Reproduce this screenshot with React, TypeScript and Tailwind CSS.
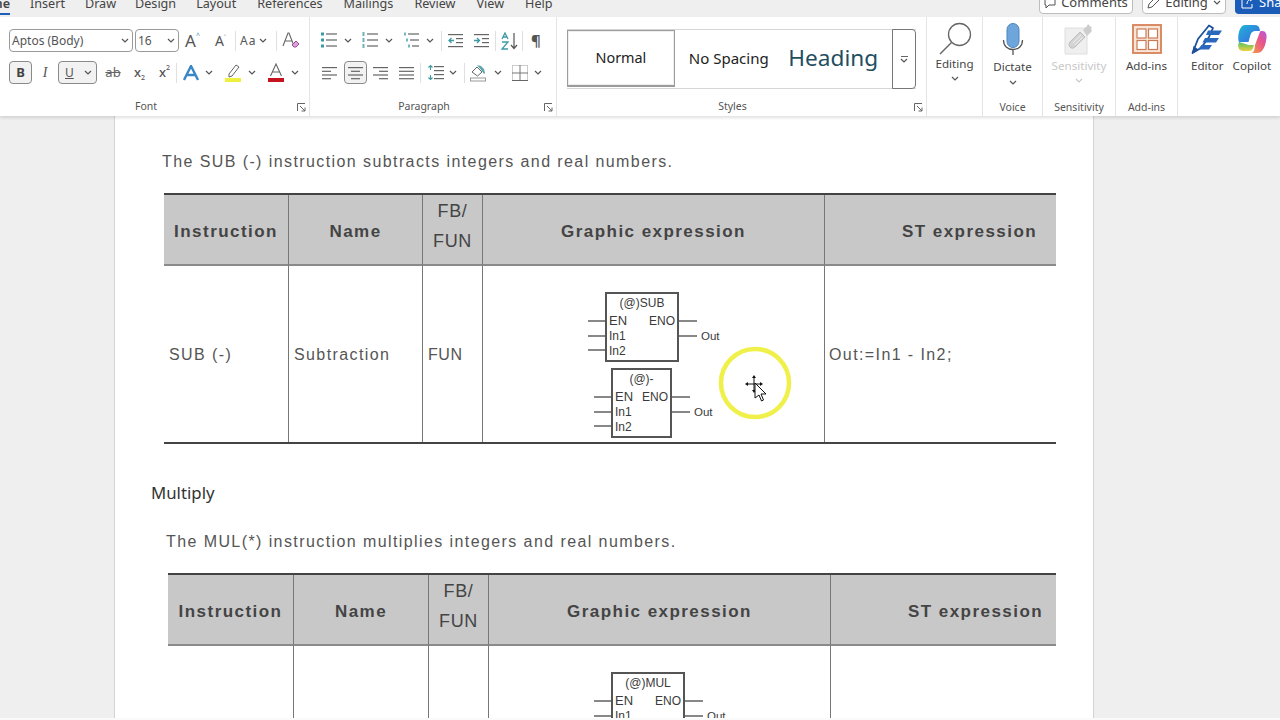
import React from "react";

const UI = "font-['Noto_Sans','Open_Sans',sans-serif]";
const DOC = "font-['Liberation_Sans',sans-serif]";

function Chev({ className = "", color = "#555" }: { className?: string; color?: string }) {
  return (
    <svg width="8" height="5" viewBox="0 0 8 5" className={className}>
      <path d="M1 1l3 3 3-3" fill="none" stroke={color} strokeWidth="1.2" />
    </svg>
  );
}

function Launcher() {
  return (
    <svg width="9" height="9" viewBox="0 0 9 9" className="shrink-0">
      <path d="M.5 8V.5H8M3 3l5 5M8 4.500V8H4.500" fill="none" stroke="#666" strokeWidth="1" />
    </svg>
  );
}

function Lines({ kind }: { kind: "l" | "c" | "r" | "j" }) {
  const rows = [16, 10, 16, 10];
  return (
    <svg width="17" height="14" viewBox="0 0 17 14">
      {rows.map((w, i) => {
        const ww = kind === "j" ? 15 : w - 1;
        const x = kind === "l" || kind === "j" ? 1 : kind === "c" ? (17 - ww) / 2 : 16 - ww;
        return <rect key={i} x={x} y={1 + i * 3.7} width={ww} height="1.2" fill="#666" />;
      })}
    </svg>
  );
}

function Bullets({ type }: { type: "b" | "n" | "m" }) {
  const t = "#3d9aa5";
  return (
    <svg width="17" height="17" viewBox="0 0 17 17">
      {[2, 8, 14].map((y, i) => (
        <g key={y}>
          {type === "b" && <rect x="1" y={y - 1.5} width="3" height="3" fill={t} />}
          {type === "n" && <rect x="1.500" y={y - 2} width="2" height="4" fill={t} opacity=".75" />}
          {type === "m" && <rect x={1 + i * 2} y={y - 1.5} width="2" height="3" fill={t} opacity=".7" />}
          <rect x={type === "m" ? 5 + i * 2 : 6} y={y - 0.6} width={type === "m" ? 11 - i * 2 : 11} height="1.2" fill="#666" />
        </g>
      ))}
    </svg>
  );
}

function Indent({ dir }: { dir: "l" | "r" }) {
  return (
    <svg width="16" height="15" viewBox="0 0 16 15">
      <rect x="0" y="1" width="15" height="1.2" fill="#666" />
      <rect x="0" y="13" width="15" height="1.2" fill="#666" />
      <rect x="8" y="5" width="7" height="1.2" fill="#666" />
      <rect x="8" y="9" width="7" height="1.2" fill="#666" />
      <path d={dir === "l" ? "M6 7.500H1M3.500 5L1 7.500 3.500 10" : "M0 7.500h5M3 5l2.500 2.500L3 10"} fill="none" stroke="#3d9aa5" strokeWidth="1.3" />
    </svg>
  );
}

function Mag() {
  return (
    <svg width="34" height="34" viewBox="0 0 34 34">
      <circle cx="21.500" cy="12.500" r="11" fill="none" stroke="#666" strokeWidth="1.3" />
      <path d="M13.500 20.500L2 32" stroke="#666" strokeWidth="1.500" />
    </svg>
  );
}

function Mic() {
  return (
    <svg width="22" height="32" viewBox="0 0 22 32">
      <rect x="5" y="0.500" width="12" height="24" rx="6" fill="#6ea6dc" stroke="#4c86bd" />
      <path d="M1.500 17c0 6 4 9.500 9.500 9.500s9.500-3.500 9.500-9.500M11 26.500V32" fill="none" stroke="#555" strokeWidth="1.300" />
    </svg>
  );
}

function SensitivityIcon() {
  return (
    <svg width="30" height="32" viewBox="0 0 30 32">
      <path d="M1 5h22v26H1z" fill="#efefef" stroke="#dedede" />
      <path d="M6 19L16 9l5 5-10 10c-2 1.500-4 1.500-5 0s-1.500-3 0-5z" fill="#d4d4d4" stroke="#bdbdbd" />
      <path d="M9 20l8-8M11 22l8-8" stroke="#efefef" />
      <path d="M19 7l4-4 1-2 4 4-1 1 1 2-5 5z" fill="#cdcdcd" />
    </svg>
  );
}

function AddIns() {
  return (
    <svg width="30" height="30" viewBox="0 0 30 30">
      <rect x="1" y="1" width="28" height="28" fill="#f9e5d8" stroke="#d68157" strokeWidth="1.800" />
      <rect x="5" y="5" width="9" height="9" fill="#fff" stroke="#c97b55" strokeWidth="1.200" />
      <rect x="16.500" y="5" width="9" height="9" fill="#fff" stroke="#c97b55" strokeWidth="1.200" />
      <rect x="5" y="16.500" width="9" height="9" fill="#fff" stroke="#c97b55" strokeWidth="1.200" />
      <rect x="16.500" y="16.500" width="9" height="9" fill="#fff" stroke="#c97b55" strokeWidth="1.200" />
    </svg>
  );
}

function EditorIcon() {
  return (
    <svg width="32" height="32" viewBox="0 0 32 32">
      <path d="M1.500 30L7 16 18 2.500l4 2.500-4 9-8 11z" fill="#fff" stroke="#1d4f9c" strokeWidth="1.800" strokeLinejoin="round" />
      <path d="M1 31l1.500-8 5 3.500z" fill="#1d4f9c" />
      <path d="M17 7.500h14l-3 4.500H15zM14 15h14l-3 4.500H11.500zM10.500 22H21l-3 4.500H7z" fill="#2a68bd" />
    </svg>
  );
}

function Copilot() {
  return (
    <svg width="30" height="30" viewBox="0 0 30 30">
      <defs>
        <linearGradient id="cpa" x1="0" y1="0" x2="1" y2="1">
          <stop offset="0" stopColor="#1fb6d8" />
          <stop offset="1" stopColor="#3d62e0" />
        </linearGradient>
        <linearGradient id="cpb" x1="0" y1="1" x2="1" y2="0">
          <stop offset="0" stopColor="#f5a13a" />
          <stop offset=".6" stopColor="#e8558c" />
          <stop offset="1" stopColor="#b15be0" />
        </linearGradient>
        <linearGradient id="cpc" x1="0" y1="0" x2="0" y2="1">
          <stop offset="0" stopColor="#4dc16a" />
          <stop offset="1" stopColor="#eed13c" />
        </linearGradient>
      </defs>
      <path d="M8 1h10c2 0 4 1 4.500 3.500L23 7h-4c-3 0-4.500 1-5.500 4l-2 7H2C0 14 2 1 8 1z" fill="url(#cpa)" />
      <path d="M2 18c-2 5 0 9 4 9h6c2 0 3.500-1 4-3l1-3H11.500z" fill="url(#cpc)" />
      <path d="M18 21l4.500-12c.500-1.500 1-2 2-2h1c3 0 4.500 3 4 7-.700 6-3 15-9 15h-7c3 0 4-2 4.500-8z" fill="url(#cpb)" />
      <path d="M13.500 11c1-3 2.500-4 5.500-4h4c-1 0-1.500.500-2 2l-4 12h-6z" fill="#fff" opacity=".55" />
    </svg>
  );
}

function Group({ w, label, sep = true, launcher = false, children }: { w: string; label: string; sep?: boolean; launcher?: boolean; children: React.ReactNode }) {
  return (
    <div className={`${w} shrink-0 flex flex-col ${sep ? "border-r border-[#e4e4e4]" : ""}`}>
      <div className="flex-1 min-h-0">{children}</div>
      <div className={`h-[22px] flex items-center relative text-[10.5px] text-[#555] ${launcher ? "pt-[4px]" : "pt-[6px]"}`}>
        <span className={`flex-1 text-center ${launcher ? "pr-[6px]" : ""}`}>{label}</span>
        {launcher && <span className="pr-[3px] flex"><Launcher /></span>}
      </div>
    </div>
  );
}

function BigTool({ label, icon, chevron = false, muted = false, gap = "", chevGap = "mt-[3px]" }: { label: string; icon: React.ReactNode; chevron?: boolean; muted?: boolean; gap?: string; chevGap?: string }) {
  return (
    <div className="flex flex-col items-center pt-[5px]">
      <div className="h-[34px] flex items-center justify-center">{icon}</div>
      <span className={`text-[11.6px] leading-[16px] ${gap} ${muted ? "text-[#c8c8c8]" : "text-[#444]"}`}>{label}</span>
      {chevron && <Chev className={chevGap} color={muted ? "#c8c8c8" : "#555"} />}
    </div>
  );
}

function Ribbon() {
  return (
    <div className={`h-[99px] shrink-0 bg-white flex pl-[1px] shadow-[0_2px_3px_rgba(0,0,0,0.12)] relative z-10 text-[#444] ${UI}`}>
      <Group w="w-[309px]" label="Font" launcher>
        <div className="pt-[12px] pl-[8px] flex flex-col gap-[9px]">
          <div className="flex items-center h-[23px]">
            <div className="w-[124px] h-[23px] border border-[#9a9a9a] rounded-[4px] flex items-center justify-between pl-[2px] pr-[3px] text-[12px] text-[#555]">
              <span className="pt-[1px]">Aptos (Body)</span><Chev />
            </div>
            <div className="w-[44px] h-[23px] ml-[2px] border border-[#9a9a9a] rounded-[4px] flex items-center justify-between pl-[2px] pr-[3px] text-[12px] text-[#555]">
              <span className="pt-[1px]">16</span><Chev />
            </div>
            <span className="ml-[6px] w-[19px] text-[17px] leading-none text-[#555] flex items-start">A<span className="text-[7px] text-[#3d9aa5] leading-none">^</span></span>
            <span className="ml-[11px] w-[15px] text-[14px] text-[#555] flex items-start leading-none">A<span className="text-[7px] leading-none">˅</span></span>
            <span className="ml-[5px] border-l border-[#e0e0e0] h-[20px]" />
            <span className="ml-[4px] text-[12px] text-[#555] tracking-[1px]">Aa</span>
            <Chev className="ml-[3px]" />
            <span className="ml-[9px] border-l border-[#e0e0e0] h-[20px]" />
            <svg width="18" height="17" viewBox="0 0 18 17" className="ml-[5px]">
              <path d="M1 14L6 1h1l5 13M3 9h7" fill="none" stroke="#666" strokeWidth="1.100" />
              <path d="M10 13l4-4 3 3-3 3h-2z" fill="#d9a5d8" stroke="#a347a0" />
            </svg>
          </div>
          <div className="flex items-center h-[23px]">
            <div className="w-[23px] h-[23px] border border-[#8a8a8a] bg-[#f2f2f2] rounded-[4px] flex items-center justify-center text-[13px] font-bold text-[#444]">B</div>
            <span className="w-[26px] text-center font-['Liberation_Serif',serif] italic text-[14px] text-[#555]">I</span>
            <div className="w-[39px] h-[23px] border border-[#8a8a8a] bg-[#f2f2f2] rounded-[4px] flex items-center justify-between pl-[6px] pr-[4px] text-[12px] text-[#555]">
              <span className="underline">U</span><Chev />
            </div>
            <span className="ml-[7px] w-[18px] text-[13px] text-[#666] line-through text-center">ab</span>
            <span className="ml-[10px] w-[15px] text-[13px] font-medium text-[#555] flex items-end justify-center">x<span className="text-[7px] leading-[8px]">2</span></span>
            <span className="ml-[10px] w-[15px] text-[13px] font-medium text-[#555] flex items-start justify-center">x<span className="text-[7px] leading-[10px]">2</span></span>
            <span className="ml-[4px] border-l border-[#e0e0e0] h-[20px]" />
            <svg width="16" height="16" viewBox="0 0 16 16" className="ml-[6px]">
              <path d="M1 15L8 1l7 14M4 10h8" fill="none" stroke="#3a87c8" strokeWidth="2.400" />
            </svg>
            <Chev className="ml-[6px]" />
            <svg width="17" height="20" viewBox="0 0 17 20" className="ml-[12px]">
              <path d="M4 11l7-9 3 2-7 9-3 1z" fill="#fff" stroke="#666" />
              <rect x="0" y="15" width="16" height="4" fill="#eef03c" />
            </svg>
            <Chev className="ml-[6px]" />
            <svg width="17" height="20" viewBox="0 0 17 20" className="ml-[12px]">
              <path d="M2.500 13L8 1l5.500 12M4.500 9h7" fill="none" stroke="#666" strokeWidth="1.100" />
              <rect x="0" y="15" width="16" height="4" fill="#c5131f" />
            </svg>
            <Chev className="ml-[6px]" />
          </div>
        </div>
      </Group>
      <Group w="w-[247px]" label="Paragraph" launcher>
        <div className="pt-[12px] pl-[10px] flex flex-col gap-[9px]">
          <div className="flex items-center h-[23px]">
            <Bullets type="b" /><Chev className="ml-[7px]" />
            <span className="ml-[9px] flex"><Bullets type="n" /></span><Chev className="ml-[7px]" />
            <span className="ml-[10px] flex"><Bullets type="m" /></span><Chev className="ml-[6px]" />
            <span className="ml-[7px] border-l border-[#e0e0e0] h-[20px]" />
            <span className="ml-[6px] flex"><Indent dir="l" /></span>
            <span className="ml-[10px] flex"><Indent dir="r" /></span>
            <span className="ml-[5px] border-l border-[#e0e0e0] h-[20px]" />
            <svg width="18" height="18" viewBox="0 0 18 18" className="ml-[5px]">
              <path d="M1 7L4 1l3 6M2 5h4" fill="none" stroke="#3d9aa5" strokeWidth="1.300" />
              <path d="M1 10h6L1 17h6" fill="none" stroke="#3d9aa5" strokeWidth="1.300" />
              <path d="M13 1v15M10 13l3 3.500 3-3.500" fill="none" stroke="#555" strokeWidth="1.200" />
            </svg>
            <span className="ml-[3px] border-l border-[#e0e0e0] h-[20px]" />
            <span className="ml-[8px] text-[15px] font-bold text-[#555] leading-none">¶</span>
          </div>
          <div className="flex items-center h-[23px]">
            <span className="ml-[1px] flex"><Lines kind="l" /></span>
            <div className="ml-[6px] w-[23px] h-[23px] border border-[#8a8a8a] bg-[#f2f2f2] rounded-[4px] flex items-center justify-center"><Lines kind="c" /></div>
            <span className="ml-[5px] flex"><Lines kind="r" /></span>
            <span className="ml-[9px] flex"><Lines kind="j" /></span>
            <span className="ml-[5px] border-l border-[#e0e0e0] h-[20px]" />
            <svg width="17" height="15" viewBox="0 0 17 15" className="ml-[6px]">
              <path d="M3.500 0v5M1.500 2.500l2-2 2 2M3.500 15v-5M1.500 12.500l2 2 2-2" fill="none" stroke="#3d9aa5" strokeWidth="1.100" />
              <rect x="7" y="1" width="10" height="1.200" fill="#666" />
              <rect x="7" y="5" width="10" height="1.200" fill="#666" />
              <rect x="7" y="9" width="10" height="1.200" fill="#666" />
              <rect x="7" y="13" width="10" height="1.200" fill="#666" />
            </svg>
            <Chev className="ml-[5px]" />
            <span className="ml-[7px] border-l border-[#e0e0e0] h-[20px]" />
            <svg width="17" height="18" viewBox="0 0 17 18" className="ml-[5px]">
              <path d="M2 8l5-5 5 5-4.500 4z" fill="#fff" stroke="#666" />
              <path d="M7 1l4 1 3 3 1 4-1 1-2-3" fill="#5aa5ae" />
              <rect x="0.500" y="14" width="15" height="3" fill="#fff" stroke="#999" />
            </svg>
            <Chev className="ml-[7px]" />
            <svg width="16" height="16" viewBox="0 0 16 16" className="ml-[10px]">
              <rect x=".5" y=".5" width="15" height="15" fill="none" stroke="#999" strokeDasharray="1 1" />
              <path d="M8 0v16M0 8h16" stroke="#777" />
              <path d="M0 15.500h16" stroke="#666" />
            </svg>
            <Chev className="ml-[6px]" />
          </div>
        </div>
      </Group>
      <Group w="w-[370px]" label="Styles" launcher>
        <div className="pt-[12px] pl-[10px] pr-[10px]">
          <div className="h-[60px] flex items-stretch border-y border-[#d6d6d6]">
            <div className="w-[110px] border border-[#9c9c9c] border-b-[2px] flex items-center justify-center text-[14.4px] text-[#222] mb-[1px] shadow-[inset_0_0_0_1px_#eee]">Normal</div>
            <div className="w-[107px] pl-[3px] flex items-center justify-center text-[15px] text-[#222] mb-[2px] whitespace-nowrap">No Spacing</div>
            <div className="w-[102px] pl-[7px] flex items-center justify-center text-[22.6px] text-[#1f4e5f] mb-[2px] whitespace-nowrap">Heading</div>
            <div className="w-[13px]" />
            <div className="w-[24px] -my-[1px] border border-[#777] rounded-r-[4px] flex flex-col items-center justify-center gap-[1px]">
              <span className="w-[7px] h-px bg-[#666]" />
              <Chev />
            </div>
          </div>
        </div>
      </Group>
      <Group w="w-[56px]" label="">
        <BigTool label="Editing" icon={<Mag />} chevron chevGap="mt-[4px]" />
      </Group>
      <Group w="w-[60px]" label="Voice">
        <BigTool label="Dictate" icon={<Mic />} chevron gap="mt-[3px]" chevGap="mt-[5px]" />
      </Group>
      <Group w="w-[73px]" label="Sensitivity">
        <BigTool label="Sensitivity" icon={<SensitivityIcon />} chevron muted gap="mt-[2px]" chevGap="mt-[4px]" />
      </Group>
      <Group w="w-[62px]" label="Add-ins">
        <BigTool label="Add-ins" icon={<AddIns />} gap="mt-[2px]" />
      </Group>
      <div className="flex pl-[13px] gap-[9px]">
        <BigTool label="Editor" icon={<EditorIcon />} gap="mt-[2px]" />
        <BigTool label="Copilot" icon={<Copilot />} gap="mt-[2px]" />
      </div>
    </div>
  );
}

function TopBar() {
  const tabs: [string, string][] = [
    ["Insert", "ml-[20px]"], ["Draw", "ml-[20px]"], ["Design", "ml-[19px]"], ["Layout", "ml-[20px]"],
    ["References", "ml-[21px]"], ["Mailings", "ml-[21px]"], ["Review", "ml-[21px]"], ["View", "ml-[21px]"], ["Help", "ml-[21px]"],
  ];
  return (
    <div className={`h-[17px] shrink-0 bg-[#efefef] flex overflow-hidden text-[12.6px] text-[#444] ${UI}`}>
      <div className="relative h-[17px] w-[10px] overflow-hidden shrink-0">
        <span className="absolute right-0 -top-[6px] leading-[20px] font-semibold">Home</span>
        <span className="absolute left-0 right-0 bottom-[2px] h-[2px] bg-[#1b5fb8]" />
      </div>
      {tabs.map(([t, m]) => (
        <span key={t} className={`${m} -mt-[6px] leading-[20px]`}>{t}</span>
      ))}
      <div className="ml-auto flex gap-[9px] -mt-[9px] h-[23px] text-[13px]">
        <div className="w-[94px] border border-[#bdbdbd] bg-white rounded-[4px] flex items-center justify-center gap-[5px]">
          <svg width="12" height="12" viewBox="0 0 12 12"><path d="M1 1h10v7H5L2 11V8H1z" fill="none" stroke="#555" /></svg>
          Comments
        </div>
        <div className="w-[84px] border border-[#bdbdbd] bg-white rounded-[4px] flex items-center justify-center gap-[5px]">
          <svg width="13" height="13" viewBox="0 0 13 13"><path d="M1 12l1-4 7-7 3 3-7 7z" fill="none" stroke="#555" /></svg>
          Editing<Chev />
        </div>
        <div className="w-[45px] bg-[#1a5cb8] rounded-l-[4px] text-white flex items-center pl-[6px] gap-[5px] overflow-hidden whitespace-nowrap">
          <svg width="13" height="13" viewBox="0 0 13 13" className="shrink-0"><path d="M4 1H1v11h10V8M6 8c0-3 2-5 6-5M9 1l3 2-3 2" fill="none" stroke="#fff" /></svg>
          Share
        </div>
      </div>
    </div>
  );
}

function Fbd({ title, x, w, y }: { title: string; x: number; w: number; y: number }) {
  const r = x + w;
  return (
    <g fontFamily="'Liberation Sans', sans-serif" fontSize="12" fill="#3a3a3a">
      <rect x={x} y={y} width={w} height="68" fill="#fff" stroke="#555" strokeWidth="2" />
      <text x={x + w / 2} y={y + 14} textAnchor="middle">{title}</text>
      <text x={x + 3} y={y + 32} fontSize="13">EN</text>
      <text x={r - 3} y={y + 32} textAnchor="end">ENO</text>
      <text x={x + 3} y={y + 47}>In1</text>
      <text x={x + 3} y={y + 62}>In2</text>
      {[28, 43, 57].map((d) => (
        <line key={d} x1={x - 18} x2={x} y1={y + d} y2={y + d} stroke="#555" strokeWidth="1.400" />
      ))}
      <line x1={r} x2={r + 19} y1={y + 28} y2={y + 28} stroke="#555" strokeWidth="1.400" />
      <line x1={r} x2={r + 19} y1={y + 43} y2={y + 43} stroke="#555" strokeWidth="1.400" />
      <text x={r + 23} y={y + 47} fontSize="11.500">Out</text>
    </g>
  );
}

function DocTable({ cols, row, stPad }: { cols: string; row: React.ReactNode[]; stPad: string }) {
  const base = "h-[71px] bg-[#c8c8c8] border-b-2 border-[#8a8a8a] flex items-center text-center text-[#444]";
  const th = "font-bold text-[17px] tracking-[1.45px] pt-[4px]";
  const line = "border-r border-r-[#777]";
  return (
    <div className={`border-t-2 border-b-2 border-[#444] grid ${cols}`}>
      <div className={`${base} ${th} ${line} justify-center`}>Instruction</div>
      <div className={`${base} ${th} ${line} justify-center`}>Name</div>
      <div className={`${base} ${line} justify-center text-[18px] text-[#333] leading-[30px] tracking-[0.6px] pb-[7px]`}>FB/<br />FUN</div>
      <div className={`${base} ${th} ${line} justify-center`}>Graphic expression</div>
      <div className={`${base} ${th} ${stPad}`}>ST expression</div>
      {row.map((c, i) => (
        <div key={i} className={`h-[176px] flex items-center pl-[5px] pt-[2px] text-[16px] text-[#555] whitespace-nowrap ${i === 2 ? "tracking-[0.6px]" : "tracking-[1.4px]"} ${i < 4 ? "border-r border-[#777]" : ""}`}>
          {c}
        </div>
      ))}
    </div>
  );
}

export default function App() {
  return (
    <div className="w-[1280px] h-[720px] overflow-hidden bg-[#efefef] flex flex-col relative">
      <TopBar />
      <Ribbon />
      <div className="flex-1 min-h-0 overflow-hidden pl-[114px]">
        <div className={`w-[980px] h-[620px] bg-white border-x border-[#d4d4d4] overflow-hidden ${DOC}`}>
          <p className="pt-[36px] pl-[47px] leading-[20px] text-[16px] tracking-[1.41px] text-[#555] whitespace-nowrap">The SUB (-) instruction subtracts integers and real numbers.</p>
          <div className="mt-[21px] ml-[49px] w-[892px]">
            <DocTable
              cols="grid-cols-[125px_134px_60px_342px_231px]"
              stPad="pl-[77px]"
              row={[
                "SUB (-)",
                "Subtraction",
                "FUN",
                <svg key="d" width="341" height="176" viewBox="0 0 341 176" className="-ml-[5px] tracking-normal">
                  <Fbd title="(@)SUB" x={123} w={72} y={26} />
                  <Fbd title="(@)-" x={129} w={59} y={102} />
                </svg>,
                <span key="s" className="-ml-[1px]">Out:=In1 - In2;</span>,
              ]}
            />
          </div>
          <p className={`mt-[37px] ml-[36px] text-[16.8px] leading-[24px] text-[#333] ${UI}`}>Multiply</p>
          <p className="mt-[27px] pl-[51px] leading-[20px] text-[16px] tracking-[1.41px] text-[#555] whitespace-nowrap">The MUL(*) instruction multiplies integers and real numbers.</p>
          <div className="mt-[21px] ml-[53px] w-[888px]">
            <DocTable
              cols="grid-cols-[126px_135px_60px_342px_225px]"
              stPad="pl-[77px]"
              row={[
                "",
                "",
                "",
                <svg key="d" width="341" height="176" viewBox="0 0 341 176" className="-ml-[5px] tracking-normal">
                  <Fbd title="(@)MUL" x={123} w={72} y={26} />
                </svg>,
                "",
              ]}
            />
          </div>
        </div>
      </div>
      <div className="h-[2px] shrink-0 bg-[#fafafa]" />
      <svg width="76" height="76" viewBox="0 0 76 76" className="absolute left-[717px] top-[345px]">
        <circle cx="38" cy="38" r="34" fill="none" stroke="#f0f04a" strokeWidth="4.500" />
        <path d="M37 33v12M31 39h12" stroke="#111" strokeWidth="1" />
        <path d="M37 30l-2 3h4zM37 48l-2-3h4zM28 39l3-2v4zM46 39l-3-2v4z" fill="#111" />
        <path d="M38 38v15l4-3 2.500 6 2-1-2.500-6h5z" fill="#fff" stroke="#111" />
      </svg>
    </div>
  );
}
